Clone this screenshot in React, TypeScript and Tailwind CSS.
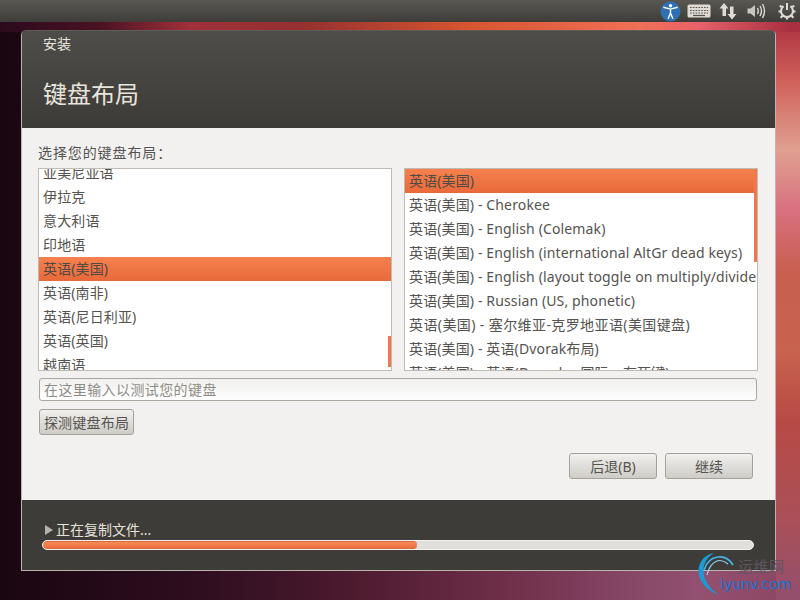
const leftRows = ["亚美尼亚语", "伊拉克", "意大利语", "印地语", "英语(美国)", "英语(南非)", "英语(尼日利亚)", "英语(英国)", "越南语"];
const rightRows = [
  "英语(美国)",
  "英语(美国) - Cherokee",
  "英语(美国) - English (Colemak)",
  "英语(美国) - English (international AltGr dead keys)",
  "英语(美国) - English (layout toggle on multiply/divide",
  "英语(美国) - Russian (US, phonetic)",
  "英语(美国) - 塞尔维亚-克罗地亚语(美国键盘)",
  "英语(美国) - 英语(Dvorak布局)",
  "英语(美国) - 英语(Dvorak，国际，有死键)",
];
const selected = "bg-gradient-to-b from-[#f5814f] to-[#e9693a] text-[#4f4a44]";

function Row({ text, active, wide }: { text: string; active: boolean; wide?: boolean }) {
  return (
    <div className={`h-6 pl-1 leading-[24px] whitespace-nowrap ${wide ? "tracking-[0.4px]" : "tracking-[0.13px]"} ${active ? selected : "text-[#555350]"}`}>{text}</div>
  );
}

function Tray() {
  return (
    <div className="h-[22px] bg-gradient-to-b from-[#585752] to-[#3e3d39] flex justify-end items-center">
      <svg width="21" height="21" viewBox="0 0 22 22" className="mr-[6px]">
        <circle cx="11" cy="11" r="10.5" fill="#2f6fb5" />
        <circle cx="11" cy="5" r="1.8" fill="#fff" />
        <path d="M3.5 6.5 L11 8.5 L18.5 6.5 M11 8 V13 M11 12.5 L8.5 18.5 M11 12.5 L13.5 18.5" stroke="#fff" strokeWidth="1.5" fill="none" />
      </svg>
      <svg width="24" height="14" viewBox="0 0 24 14" className="mr-2">
        <rect x="0.5" y="0.5" width="23" height="13" rx="1.5" fill="#dfdbd2" />
        <path d="M3 3.5H21M3 6.5H21M3 9H21" stroke="#55534e" strokeWidth="1.1" strokeDasharray="1.6 1.2" />
        <path d="M6 11.5H18" stroke="#55534e" strokeWidth="1.2" />
      </svg>
      <svg width="18" height="20" viewBox="0 0 18 20" className="mr-[10px]">
        <path d="M5 2 L9.5 7.5 H7 V15 H3.5 V7.5 H0.5 Z" fill="#dfdbd2" />
        <path d="M13 18.5 L8.5 13 H11 V5.5 H14.5 V13 H17.5 Z" fill="#dfdbd2" />
      </svg>
      <svg width="20" height="18" viewBox="0 0 20 18" className="mr-[11px]">
        <path d="M0.5 6.5 H3.5 L8 3 V15 L3.5 11.5 H0.5 Z" fill="#c9c6be" />
        <path d="M10.5 6 Q12 9 10.5 12 M13 4 Q16 9 13 14 M15.5 2 Q19.5 9 15.5 16" stroke="#dfdbd2" strokeWidth="1.4" fill="none" />
      </svg>
      <svg width="18" height="18" viewBox="0 0 18 18" className="mr-[4px]">
        <path d="M5.5 4.2 A6 6 0 1 0 12.5 4.2" stroke="#dfdbd2" strokeWidth="2.2" fill="none" />
        <path d="M9 1 V8" stroke="#dfdbd2" strokeWidth="2" />
        <path d="M9 14 V17.5 M3 9.5 H0.5 M15 9.5 H17.5 M4.6 13.8 L2.6 15.8 M13.4 13.8 L15.4 15.8 M3.6 5 L1.8 3.6 M14.4 5 L16.2 3.6" stroke="#dfdbd2" strokeWidth="2.2" />
      </svg>
    </div>
  );
}

function Btn({ label, className }: { label: string; className: string }) {
  return (
    <div className={`h-[26px] flex items-center justify-center rounded-[3px] border border-[#a5a29b] bg-gradient-to-b from-[#f1f0ee] to-[#cfccc7] text-[#555350] ${className}`}>
      {label}
    </div>
  );
}

export default function App() {
  return (
    <div
      className="relative w-[800px] h-[600px] overflow-hidden text-[14px] [background:linear-gradient(90deg,#2c0a1e_0px,#4a1222_100px,#a0303a_190px,#943030_300px,#d85530_470px,#f07058_640px,#e8606a_700px,#a83040_790px)_0_0/100%_32px_no-repeat,linear-gradient(180deg,#a83040_0px,#d0605a_60px,#e0a090_130px,#d87080_190px,#c85f50_250px,#c8634f_330px,#b84a45_400px,#aa5058_500px,#8f4f70_590px)_100%_20px/24px_100%_no-repeat,linear-gradient(90deg,#1a0610_0px,#2e0e20_200px,#4c1a2e_350px,#6e2e48_500px,#8a4a6a_650px,#935070_700px,#8a4560_800px)]"
      style={{ fontFamily: '"Noto Sans", "Noto Sans CJK SC", sans-serif' }}
    >
      <Tray />
      <div className="ml-[21px] mt-2 w-[755px] h-[541px] flex flex-col overflow-hidden rounded-t-[5px] border border-[#b9b6b0] border-t-[#5c5b56]">
        <div className="h-[97px] bg-gradient-to-b from-[#4f4d49] to-[#3d3b37] pl-[21px] text-[#e8e5dd]">
          <div className="pt-px h-[24px] text-[14px] leading-[24px]">安装</div>
          <div className="mt-[21px] text-[24px] leading-[36px]">键盘布局</div>
        </div>
        <div className="h-[372px] bg-[#f2f1ef] pl-4 pr-[17px] pt-[15px] flex flex-col">
          <div className="h-[20px] leading-[20px] tracking-[0.9px] text-[#555350]">选择您的键盘布局：</div>
          <div className="mt-[5px] flex justify-between w-[720px]">
            <div className="relative w-[354px] h-[203px] bg-white border border-[#bfbcb6] overflow-hidden">
              <div className="-mt-2">
                {leftRows.map((r) => <Row key={r} text={r} active={r === "英语(美国)"} />)}
              </div>
              <div className="absolute right-0 top-[167px] w-[3px] h-[31px] bg-[#f0784a]" />
            </div>
            <div className="relative w-[354px] h-[203px] bg-white border border-[#bfbcb6] overflow-hidden">
              {rightRows.map((r, i) => <Row key={r} text={r} active={i === 0} wide={i === 6} />)}
              <div className="absolute right-0 top-0 w-[3px] h-[93px] bg-[#f0784a]" />
            </div>
          </div>
          <div className="mt-[7px] ml-px w-[718px] h-[23px] rounded-[3px] border border-[#aaa79f] bg-gradient-to-b from-[#f1f0ee] to-white pl-1 leading-[21px] tracking-[0.4px] text-[#8e8c87]">
            在这里输入以测试您的键盘
          </div>
          <Btn label="探测键盘布局" className="mt-2 ml-px w-[95px] tracking-[0.2px]" />
          <div className="mt-[18px] w-[715px] flex justify-end gap-2">
            <Btn label="后退(B)" className="w-[88px]" />
            <Btn label="继续" className="w-[88px]" />
          </div>
        </div>
        <div className="flex-1 bg-[#3e3c38] pl-[20px] pt-[20px]">
          <div className="flex items-center h-[20px] text-[#e4e1d9] leading-[20px]">
            <svg width="8" height="10" viewBox="0 0 8 10" className="ml-[3px] mr-[3px]"><path d="M0 0 L8 5 L0 10 Z" fill="#b5b2ab" /></svg>
            <span>正在复制文件...</span>
          </div>
          <div className="w-[712px] h-[10px] rounded-full bg-[#e0dfdb] border border-[#f2f1ef] overflow-hidden">
            <div className="w-[374px] h-[8px] rounded-full border-y border-[#d9683a] bg-gradient-to-b from-[#f98a58] to-[#ec6f3e]" />
          </div>
        </div>
      </div>

      <svg width="46" height="48" viewBox="0 0 46 48" className="absolute left-[692px] top-[550px]">
        <path d="M22 3 C3 6 -2 34 27 45 C10 34 5 14 22 3Z" fill="#1b9ad6" />
        <path d="M41 15 C34 3 17 4 12 20" stroke="#45b6ea" strokeWidth="1.6" fill="none" />
        <path d="M36 14 C29 8 19 9 15 25" stroke="#8fd6f2" strokeWidth="1.1" fill="none" />
      </svg>
      <div className="absolute left-[738px] top-[557px] text-[15px] leading-[18px] tracking-[0.5px] text-[#5f5660]">运维网</div>
      <div
        className="absolute left-[720px] top-[575px] text-[14px] leading-[18px] text-[#1272d4]"
        style={{ fontFamily: '"DejaVu Sans", sans-serif' }}
      >
        iyunv.com
      </div>
    </div>
  );
}
